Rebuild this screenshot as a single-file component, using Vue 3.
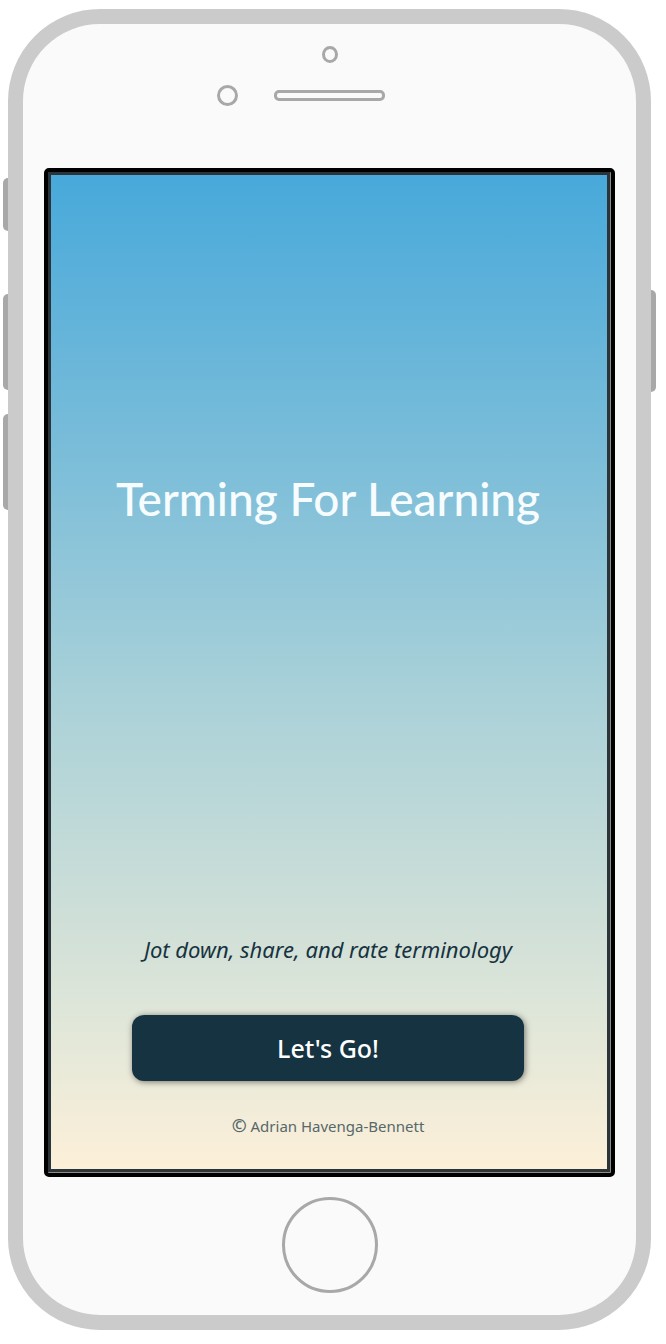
<script setup>
const sideKeys = ['mute', 'volume-up', 'volume-down', 'power']
</script>

<template>
  <div class="stage">
    <div class="phone">
      <span v-for="key in sideKeys" :key="key" class="key" :class="key"></span>

      <div class="top">
        <span class="sensor"></span>
        <div class="speaker-row">
          <span class="camera"></span>
          <span class="speaker"></span>
          <span></span>
        </div>
      </div>

      <div class="bezel">
        <main class="screen">
          <h1 class="title">Terming For Learning</h1>
          <p class="tagline">Jot down, share, and rate terminology</p>
          <button class="start" type="button">Let's Go!</button>
          <footer class="credit"><span class="mark">©</span> Adrian Havenga-Bennett</footer>
        </main>
      </div>

      <button class="home" type="button" aria-label="Home"></button>
    </div>
  </div>
</template>

<style>
body {
  background: #fff;
}
</style>

<style scoped>
.stage {
  box-sizing: border-box;
  min-height: 100vh;
  padding: 9px 15px 14px 8px;
  display: flex;
  font-family: "Trebuchet MS", "Noto Sans", sans-serif;
}

.phone {
  position: relative;
  box-sizing: border-box;
  flex: 1;
  display: flex;
  flex-direction: column;
  padding: 22px 21px;
  border: 15px solid #cbcbcb;
  border-radius: 92px;
  background: #fafafa;
}

.key {
  position: absolute;
  left: -20px;
  width: 5px;
  height: 96px;
  border-radius: 5px 0 0 5px;
  background: #a8a8a8;
}

.mute {
  top: 154px;
  height: 53px;
}

.volume-up {
  top: 270px;
}

.volume-down {
  top: 390px;
}

.power {
  left: auto;
  right: -20px;
  top: 266px;
  height: 102px;
  border-radius: 0 5px 5px 0;
}

.top {
  height: 122px;
  display: flex;
  flex-direction: column;
  align-items: center;
  gap: 22px;
}

.sensor,
.camera,
.speaker,
.home {
  box-sizing: border-box;
  border: 3px solid #a8a8a8;
  background: transparent;
}

.sensor {
  width: 16px;
  height: 17px;
  border-radius: 50%;
}

.speaker-row {
  display: grid;
  grid-template-columns: 21px 111px 21px;
  gap: 36px;
  align-items: center;
}

.camera {
  height: 21px;
  border-radius: 50%;
}

.speaker {
  height: 11px;
  border-radius: 5px;
}

.bezel {
  flex: 1;
  display: flex;
  border: 4px solid #000;
  border-radius: 5px;
  background: #8d8d88;
}

.screen {
  box-sizing: border-box;
  flex: 1;
  display: flex;
  flex-direction: column;
  align-items: center;
  margin: 0 1px 1px 0;
  padding: 0 10px 31px 8px;
  border: 3px solid #2b3438;
  background: linear-gradient(#48a9da 0%, #82c0d9 32%, #acd2d8 54%, #d4e1d8 78%, #e0e7d9 85%, #f1ecd9 94%, #fdf0d9 100%);
}

.title {
  margin: auto 0;
  padding-bottom: 112px;
  color: #f7fcff;
  font-family: "Trebuchet MS", Lato, sans-serif;
  font-size: 46px;
  font-weight: 500;
  line-height: 56px;
}

.tagline {
  margin: 0 0 52px;
  color: #173340;
  font-size: 22px;
  font-style: italic;
  line-height: 28px;
}

.start {
  width: 73%;
  height: 66px;
  margin: 0 0 32px;
  padding: 0;
  border: 0;
  border-radius: 12px;
  background: #163341;
  box-shadow: 1px 1px 6px rgba(0, 0, 0, 0.5);
  color: #fff;
  font-family: inherit;
  font-size: 25px;
  font-weight: 500;
  line-height: 32px;
}

.credit {
  color: #56686a;
  font-family: "Comic Sans MS", "Noto Sans", sans-serif;
  font-size: 15px;
  line-height: 24px;
}

.mark {
  font-size: 18px;
  font-weight: 600;
}

.home {
  align-self: center;
  width: 96px;
  height: 96px;
  margin-top: 20px;
  padding: 0;
  border-radius: 50%;
}
</style>
